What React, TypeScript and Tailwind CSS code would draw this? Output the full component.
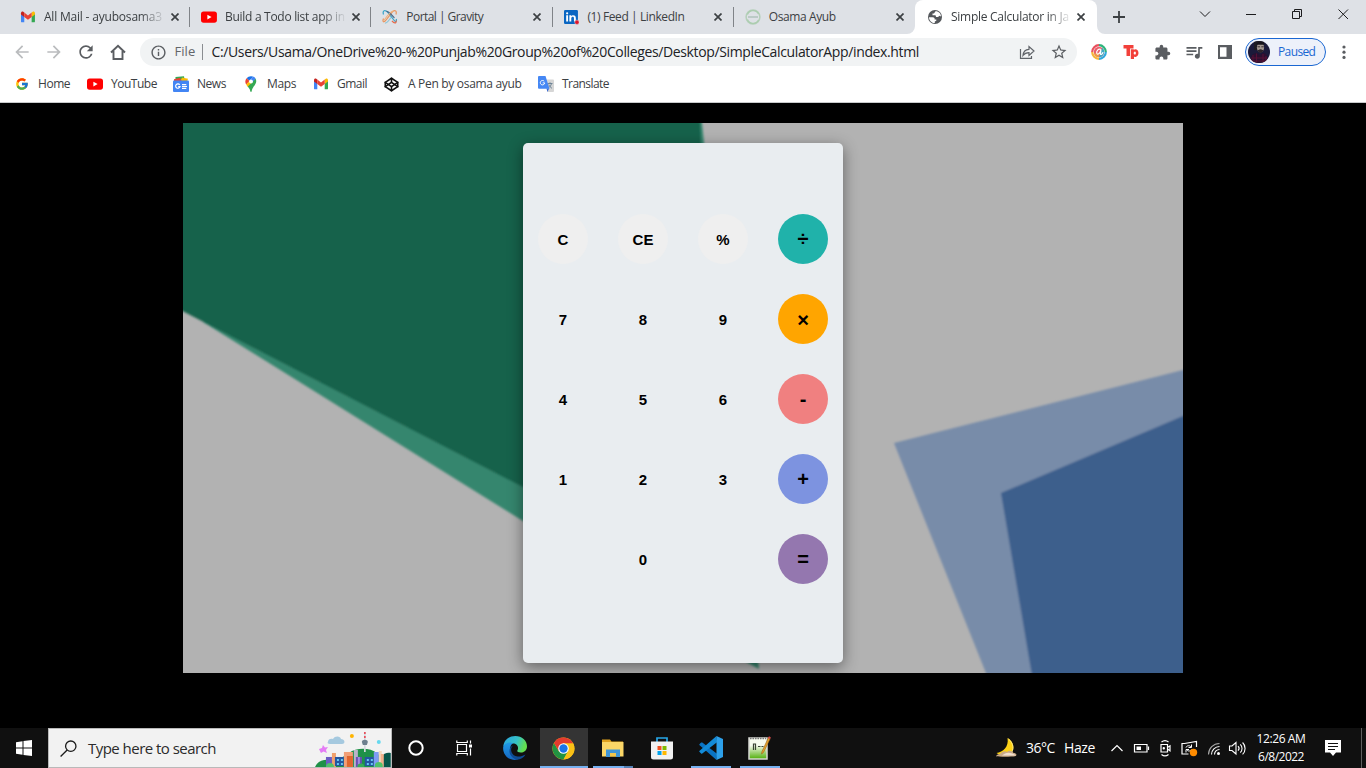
import React from 'react';
import type { ReactNode } from 'react';
import { MdArrowBack, MdArrowForward, MdRefresh, MdStarBorder, MdExtension, MdQueueMusic, MdInfoOutline } from 'react-icons/md';
import { FcGoogle } from 'react-icons/fc';
import { FiCodepen } from 'react-icons/fi';

/* ---------- site icons ---------- */

const Gmail = () => (
  <svg width="16" height="16" viewBox="0 0 16 16">
    <path d="M1 4.2V12.4a.9.9 0 0 0 .9.9H4.300V7z" fill="#4285f4" />
    <path d="M15 4.200V12.400a.9.9 0 0 1-.9.9H11.700V7z" fill="#34a853" />
    <path d="M11.700 3.600V8L15 5.500V4.200c0-1.500-1.500-2-2.500-1.300z" fill="#fbbc04" />
    <path d="M4.300 3.600V8L1 5.500V4.200c0-1.500 1.500-2 2.500-1.300z" fill="#c5221f" />
    <path d="M4.300 8V3.600L8 6.400l3.700-2.800V8L8 10.800z" fill="#ea4335" />
  </svg>
);

const YouTube = () => (
  <svg width="16" height="16" viewBox="0 0 16 16">
    <rect x="0" y="2.500" width="16" height="11.200" rx="2.600" fill="#f00" />
    <path d="M6.400 5.700v4.800l4.200-2.400z" fill="#fff" />
  </svg>
);

const Gravity = () => (
  <svg width="16" height="16" viewBox="0 0 16 16" fill="none" strokeWidth="1.200">
    <path d="M1.500 5.500C0 1 3.500.5 6.500 4l5 6.500c2 3 3.500 2.500 2.800-.5" stroke="#35a4c9" />
    <path d="M14 5.500C15.500 1 12 .5 9.500 4l-5 6.500c-2.500 3.500-4.500 3-3-1" stroke="#e8935c" />
    <path d="M4.500 2.500C6 1.500 9 5 12.500 9" stroke="#4a6a8c" />
    <path d="M12 2C9 1.500 5 7 2 11.500" stroke="#f0b27c" />
    <path d="M3 14.200c2 .2 4-2.700 6-5.700" stroke="#8cc5d6" />
    <path d="M10 12c2 2.500 4.500 3 4.300-.5" stroke="#e46b4c" />
  </svg>
);

const LinkedIn = () => (
  <svg width="16" height="16" viewBox="0 0 16 16">
    <rect x="0" y="1" width="14" height="14" rx="1.200" fill="#0a66c2" />
    <path d="M2.200 6.300h1.900v6.200H2.200zM5.400 6.300h1.800v.9c.9-1.500 4.700-1.500 4.700 1.700v3.600h-1.900V9.400c0-2.200-2.700-1.900-2.700 0v3.100H5.400z" fill="#fff" />
    <circle cx="3.150" cy="4.300" r="1.100" fill="#fff" />
    <circle cx="13" cy="13.300" r="2.200" fill="#e0162b" stroke="#dee1e6" strokeWidth=".5" />
  </svg>
);

const GreenRing = () => (
  <svg width="16" height="16" viewBox="0 0 16 16" fill="none">
    <circle cx="8" cy="8" r="6.900" stroke="#b5cfb9" strokeWidth="1.500" />
    <path d="M2.500 5.500A6 6 0 0 1 13.500 5M2.500 10.500A6 6 0 0 0 13.500 11" stroke="#aacdae" strokeWidth="1.200" />
    <path d="M3 8h10" stroke="#b3c4be" strokeWidth="1.600" />
  </svg>
);

const Globe = () => (
  <svg width="16" height="16" viewBox="0 0 16 16" className="shrink-0">
    <circle cx="8" cy="8" r="7" fill="#54575b" />
    <path d="M8.500 2.200 7 4.500H5.500v1.700l3 .1.600 1.700H11l1.500-1.200 1.500.7C14 4.500 11.500 2 8.500 2.200z" fill="#fff" />
    <path d="M2 8.200h3.500c2 0 2.300 1 2.100 2.200h1.700v1.300l-1.500.7v1.700C4.800 14 2 11.500 2 8.200z" fill="#fff" />
  </svg>
);

const GoogleNews = () => (
  <svg width="16" height="16" viewBox="0 0 16 16">
    <path d="M2.500 1 11 .3l.5 4H2.500z" fill="#34a853" />
    <path d="M9 1.500l6 1.200-1 3H7z" fill="#fbbc04" />
    <path d="M1 3.200l6-1.400 2 4H1z" fill="#ea4335" />
    <rect x="0" y="4.500" width="16" height="11.500" rx="1" fill="#4285f4" />
    <path d="M6.700 8.800A2.200 2.200 0 1 0 7 10.600H5.200M9 8.600h4.300M9 10.500h5M9 12.400h4.300" fill="none" stroke="#fff" strokeWidth="1.200" />
  </svg>
);

const GoogleMaps = () => (
  <svg width="16" height="16" viewBox="0 0 16 16">
    <path d="M8 0.200A5.600 5.600 0 0 0 3.600 2.300l3 2.600L10 .6A6 6 0 0 0 8 .2z" fill="#1a73e8" />
    <path d="M3.600 2.300A5.600 5.600 0 0 0 3.200 8.600l3.400-3.700z" fill="#ea4335" />
    <path d="M10 .6 6.400 5 9.600 7.200l3.100-4.400A5.500 5.500 0 0 0 10 .6z" fill="#4285f4" />
    <path d="M9.600 7.200 4.800 11 3.200 8.600 6.400 5z" fill="#fbbc04" />
    <path d="M12.700 2.800C15 8 9.300 9.800 8.700 15.200c-.2.900-1.200.9-1.400 0-.3-2-1.300-3-2.500-4.700z" fill="#34a853" />
    <circle cx="8" cy="5.400" r="2" fill="#fff" />
  </svg>
);

const Translate = () => (
  <svg width="16" height="16" viewBox="0 0 16 16">
    <path d="M6.500 3.500H15a1 1 0 0 1 1 1V15a1 1 0 0 1-1 1H9.500z" fill="#d6d6d6" />
    <path d="M9.500 7.500h5M12 6.300v1.200M13.500 7.500c-.5 2.300-2 3.800-3.500 4.800M10.800 8.500c.7 1.800 1.800 2.900 3.200 3.800" stroke="#667e92" strokeWidth=".9" fill="none" />
    <path d="M8.500 12.500 11 12.500 9.500 16z" fill="#3367d6" />
    <path d="M1 0h6.500L11.500 12.700H1a1 1 0 0 1-1-1V1a1 1 0 0 1 1-1z" fill="#4587f4" />
    <path d="M6.200 5.300A2.200 2.200 0 1 0 6.700 6.900H4.700" fill="none" stroke="#fff" strokeWidth="1" />
  </svg>
);

/* ---------- browser chrome ---------- */

const Cross = () => (
  <svg width="8" height="8" viewBox="0 0 8 8" className="shrink-0">
    <path d="M.5.5l7 7M7.500.5l-7 7" stroke="#3c4043" strokeWidth="1.700" />
  </svg>
);

const tabs: { icon: ReactNode; title: string; track: string; fade: boolean }[] = [
  { icon: <Gmail />, title: 'All Mail - ayubosama3', track: 'tracking-[-0.19px]', fade: true },
  { icon: <YouTube />, title: 'Build a Todo list app in', track: 'tracking-[-0.3px]', fade: true },
  { icon: <Gravity />, title: 'Portal | Gravity', track: 'tracking-[-0.55px]', fade: false },
  { icon: <LinkedIn />, title: '(1) Feed | LinkedIn', track: 'tracking-[-0.4px]', fade: false },
  { icon: <GreenRing />, title: 'Osama Ayub', track: 'tracking-[-0.39px]', fade: false },
];

function TabStrip() {
  return (
    <div className="flex h-[34px] bg-[#dee1e6] pl-[9px]">
      {tabs.map((t, i) => (
        <div key={t.title} className="flex h-[34px] w-[181.200px] shrink-0 items-center pl-[11px]">
          {t.icon}
          <div className={`ml-2 w-[122px] whitespace-nowrap ${t.track} ${t.fade ? '[mask-image:linear-gradient(to_right,black_96px,transparent_122px)]' : ''}`}>{t.title}</div>
          <div className="ml-[5.500px] flex w-[18.500px]"><Cross /></div>
          {i < 4 && <div className="h-5 w-px shrink-0 bg-[#808388]" />}
        </div>
      ))}
      <div className="relative flex h-[34px] w-[182px] shrink-0 items-center rounded-t-lg bg-white pl-[12px]">
        <svg className="absolute bottom-0 -left-2" width="8" height="8" viewBox="0 0 8 8"><path d="M8 0v8H0a8 8 0 0 0 8-8z" fill="#fff" /></svg>
        <svg className="absolute -right-2 bottom-0" width="8" height="8" viewBox="0 0 8 8"><path d="M0 0v8h8a8 8 0 0 1-8-8z" fill="#fff" /></svg>
        <Globe />
        <div className="ml-2 w-[121px] tracking-[-0.26px] whitespace-nowrap [mask-image:linear-gradient(to_right,black_96px,transparent_121px)]">Simple Calculator in Ja</div>
        <div className="ml-[5px] flex"><Cross /></div>
      </div>
      <svg className="mt-[11px] ml-[16px] shrink-0" width="12" height="12" viewBox="0 0 12 12"><path d="M6 0v12M0 6h12" stroke="#3c4043" strokeWidth="1.800" /></svg>
      <svg className="ml-auto h-7 w-[167px] shrink-0" viewBox="1199 0 167 28" fill="none" stroke="#1c1c1e" strokeWidth="1">
        <path d="M1200 11.500l5 5 5-5" />
        <path d="M1246 14.500h10" />
        <path d="M1292.500 11.500h7v7h-7zM1294.500 11.500v-2h7v7h-2" />
        <path d="M1338.500 9.500l9.500 9.500M1348 9.500l-9.500 9.500" />
      </svg>
    </div>
  );
}

const Swirl = () => (
  <svg width="16" height="16" viewBox="0 0 16 16" fill="none">
    <path d="M8 1.200A6.800 6.800 0 0 0 1.200 8" stroke="#e9505d" strokeWidth="2.200" />
    <path d="M1.200 8A6.800 6.800 0 0 0 8 14.800" stroke="#f5b53c" strokeWidth="2.200" />
    <path d="M8 14.800A6.800 6.800 0 0 0 14.800 8" stroke="#2fa8dc" strokeWidth="2.200" />
    <path d="M14.800 8A6.800 6.800 0 0 0 8 1.200" stroke="#2db37c" strokeWidth="2.200" />
    <circle cx="8" cy="8" r="5.200" fill="#e9606c" />
    <path d="M8 13.200A5.200 5.200 0 0 0 11 3.800z" fill="#3fa9c4" />
    <path d="M3 9.500a5.200 5.200 0 0 0 5 3.700l.5-4z" fill="#ef9a45" />
    <path d="M10.300 5.500C7 4.300 5.300 7 5.700 9.200c.6 2 3.300.6 4.200-3l-.5 3.600c.2 1.200 2.200.4 2.600-1.600" stroke="#fff" strokeWidth="1.200" />
  </svg>
);

function Toolbar() {
  return (
    <div className="flex h-9 items-center bg-white pl-[12px]">
      <MdArrowBack size={20} color="#babcbe" className="shrink-0" />
      <MdArrowForward size={20} color="#babcbe" className="ml-3 shrink-0" />
      <MdRefresh size={20} color="#5a5d61" className="ml-3 shrink-0" />
      <svg className="ml-[14px] shrink-0" width="16" height="16" viewBox="0 0 16 16" fill="none" stroke="#5a5d61" strokeWidth="1.900">
        <path d="M1 8.500 8 1.700l7 6.800M3.500 7v8h9V7" />
      </svg>
      <div className="ml-[14px] flex h-7 w-[937px] shrink-0 items-center rounded-full bg-[#f1f3f4] pl-[10px]">
        <MdInfoOutline size={17} color="#5a5d61" />
        <span className="ml-[7.500px] w-[27px] text-[13px] tracking-[0.05px] text-[#63666a]">File</span>
        <div className="h-4 w-px bg-[#8a8d91]" />
        <span className="ml-[9px] w-[800px] text-sm tracking-[-0.368px] whitespace-nowrap text-[#202124]">C:/Users/Usama/OneDrive%20-%20Punjab%20Group%20of%20Colleges/Desktop/SimpleCalculatorApp/index.html</span>
        <svg className="ml-[7px] shrink-0" width="16" height="16" viewBox="0 0 16 16" fill="none" stroke="#5f6368" strokeWidth="1.200">
          <path d="M1.500 5v9.400h11V12" />
          <path d="M4 11.500C4.300 7.800 6.300 5.500 10 5.300V2.500L15 7l-5 4.500V8.700C7.500 8.700 5.500 9.500 4 11.500z" />
        </svg>
        <MdStarBorder size={18} color="#5a5d61" className="ml-[15px] shrink-0" />
      </div>
      <div className="ml-[14px] flex w-[143px] shrink-0 items-center">
        <Swirl />
        <svg className="ml-4" width="16" height="16" viewBox="0 0 16 16" fill="#f2403a">
          <path d="M.5 1h10v3.500H7V12H3.500V4.500h-3z" />
          <path fillRule="evenodd" d="M7.800 5.200h3v.6c2.200-1.500 4.700.2 4.700 3.300s-2.500 4.700-4.500 3.300V15H7.800zM12 7.400c-1.700 0-1.700 3.200 0 3.200 1.200 0 1.200-3.200 0-3.200z" />
        </svg>
        <MdExtension size={17} color="#5a5d61" className="ml-[15px]" />
        <MdQueueMusic size={20} color="#5a5d61" className="ml-[13px]" />
        <svg className="ml-[14px]" width="14" height="14" viewBox="0 0 14 14"><path fillRule="evenodd" d="M0 0h14v14H0zM2 2.200v9.600h6.500V2.200z" fill="#5a5d61" /></svg>
      </div>
      <div className="ml-[11px] flex h-7 w-[81px] shrink-0 items-center rounded-full border border-[#1a67d2] bg-[#edf1fa] pl-[2px]">
        <svg width="22" height="22" viewBox="0 0 22 22">
          <clipPath id="face"><circle cx="11" cy="11" r="11" /></clipPath>
          <g clipPath="url(#face)">
            <rect width="22" height="22" fill="#1b1a3a" />
            <path d="M6 0h10v9H6z" fill="#1d1b22" />
            <ellipse cx="12.500" cy="6.500" rx="3.600" ry="4.800" fill="#a59a93" />
            <path d="M8.500 3c1-3 7-3 8 0l-1 .8h-6z" fill="#17141c" />
            <path d="M9.500 5.800h2.600M13.300 5.800h2.500" stroke="#3d3236" />
            <path d="M9.500 9c1 3.500 5 3.500 6 0l-1 0c-1-1-3-1-4 0z" fill="#2d2429" />
            <path d="M2 22c0-7 3-10 7-10l3 2 3-2c4 0 5 4 5 10z" fill="#2a1030" />
            <path d="M5 14v8M8.500 12.500V22M15 13v9M18 15v7M3 17h16M3 20h16" stroke="#5b1235" strokeWidth=".9" />
          </g>
        </svg>
        <span className="ml-2 tracking-[-0.62px] whitespace-nowrap text-[#1a67d2]">Paused</span>
      </div>
      <svg className="ml-4 shrink-0" width="4" height="14" viewBox="0 0 4 14" fill="#5a5d61"><circle cx="2" cy="2" r="1.600" /><circle cx="2" cy="7.200" r="1.600" /><circle cx="2" cy="12.400" r="1.600" /></svg>
    </div>
  );
}

const bookmarks: { icon: ReactNode; label: string; cls: string }[] = [
  { icon: <FcGoogle size={14} className="mx-px" />, label: 'Home', cls: 'w-[73px] tracking-[-0.45px]' },
  { icon: <YouTube />, label: 'YouTube', cls: 'w-[86px] tracking-[-0.48px]' },
  { icon: <GoogleNews />, label: 'News', cls: 'w-[70px] tracking-[-0.45px]' },
  { icon: <GoogleMaps />, label: 'Maps', cls: 'w-[70px] tracking-[-0.38px]' },
  { icon: <Gmail />, label: 'Gmail', cls: 'w-[71px] tracking-[-0.5px]' },
  { icon: <FiCodepen size={15} strokeWidth={2.500} color="#111" className="mr-px" />, label: 'A Pen by osama ayub', cls: 'w-[154px] tracking-[-0.31px]' },
  { icon: <Translate />, label: 'Translate', cls: 'w-[80px] tracking-[-0.55px]' },
];

const Bookmarks = () => (
  <div className="flex h-[33px] items-center border-b border-[#c8cacc] bg-white pb-1 pl-[14px]">
    {bookmarks.map((b) => (
      <div key={b.label} className={`flex shrink-0 items-center whitespace-nowrap ${b.cls}`}>
        {b.icon}
        <span className="ml-2">{b.label}</span>
      </div>
    ))}
  </div>
);

/* ---------- calculator page ---------- */

const plain = 'text-[15px] pt-0.5';
const soft = 'text-[15px] pt-0.5 bg-[#efefef]';
const keys: [string, string][] = [
  ['C', soft], ['CE', soft], ['%', soft], ['÷', 'text-xl bg-[#20b2aa]'],
  ['7', plain], ['8', plain], ['9', plain], ['×', 'text-xl pt-0.5 bg-[#ffa500]'],
  ['4', plain], ['5', plain], ['6', plain], ['-', 'text-xl bg-[#f08080]'],
  ['1', plain], ['2', plain], ['3', plain], ['+', 'text-xl bg-[#7d93e0]'],
  ['', plain], ['0', plain], ['', plain], ['=', 'text-xl bg-[#9477af]'],
];

const Calculator = () => (
  <div className="h-[520px] w-[320px] rounded-[5px] bg-[#e9edf0] pt-[56px] font-['Liberation_Sans',sans-serif] font-bold text-black shadow-[0_4px_15px_rgba(0,0,0,0.45)]">
    <div className="grid grid-cols-4">
      {keys.map(([label, cls], i) => (
        <div key={i} className="flex h-20 items-center justify-center">
          <button className={`flex size-[50px] items-center justify-center rounded-full ${cls}`}>{label}</button>
        </div>
      ))}
    </div>
  </div>
);

const Page = () => (
  <div className="flex h-[625px] justify-center bg-black pt-5">
    <div className="grid h-[550px] w-[1000px] justify-items-center overflow-hidden">
      <svg className="col-start-1 row-start-1" width="1000" height="550" viewBox="0 0 1000 550">
        <defs><filter id="soften" x="-5%" y="-5%" width="110%" height="110%"><feGaussianBlur stdDeviation="0.900" /></filter></defs>
        <rect width="1000" height="550" fill="#b2b2b2" />
        <g filter="url(#soften)">
          <path d="M517 -20 519 0 576 546 565 540 340 398 20 199z" fill="#36866e" />
          <path d="M-20 -20H517V0L540 467.500 -20 178z" fill="#18624c" />
          <path d="M711 320 1020 242V570H811z" fill="#788ca9" />
          <path d="M818 370 1020 284.500V570H852z" fill="#3c5e8c" />
        </g>
      </svg>
      <div className="z-10 col-start-1 row-start-1 pt-5"><Calculator /></div>
    </div>
  </div>
);

/* ---------- taskbar ---------- */

const City = () => (
  <svg width="76" height="38" viewBox="0 0 76 38" className="self-end">
    <path d="M0 38c3-6 8-8 16-7 8 0 12-3 18-7 8-6 22-5 28 0 5 4 8 8 10 14z" fill="#1f9148" />
    <path d="M66 28c3-4 7-5 10-4v14H64z" fill="#07564b" />
    <path d="M13 13c0-3 3-4 5-3 2-4 8-3 8 0 4 0 5 5 1 5H15c-2 0-3-1-2-2z" fill="#a5c9df" />
    <path d="M4 20l3-1 1-3 2 2.500 3-.5-2 3 1 3-3.500-1.500L6 24z" fill="#e57cf5" />
    <circle cx="37" cy="7" r="2" fill="#ffb400" />
    <circle cx="64" cy="13" r="2" fill="#66d9ef" />
    <path d="M50 3v20" stroke="#d5d9e0" strokeWidth="1.700" />
    <path d="M50 3v2M50 7v2" stroke="#e8505b" strokeWidth="1.700" />
    <path d="M47 13c0-3 6-3 6 0l-1 3h-4z" fill="#6d7f8e" />
    <rect x="11" y="28" width="6" height="10" fill="#6b5cc4" />
    <rect x="17" y="24" width="4" height="14" fill="#f0a06c" />
    <rect x="20" y="28" width="9" height="9" fill="#2456a0" />
    <path d="M22 30h2v2h-2zM26 30h2v2h-2zM22 34h2v2h-2zM26 34h2v2h-2z" fill="#66c7f2" />
    <rect x="29" y="23" width="9" height="15" fill="#f1a078" />
    <path d="M32 27h6v11h-6z" fill="#e0662f" />
    <rect x="39" y="21" width="4" height="17" fill="#b9b4c8" />
    <rect x="41" y="28" width="6" height="10" fill="#6a4fb5" />
    <rect x="43" y="28" width="2" height="10" fill="#9f8ce0" />
    <rect x="50" y="28" width="9" height="9" fill="#2456a0" />
    <path d="M52 30h2v2h-2zM56 30h2v2h-2zM52 34h2v2h-2zM56 34h2v2h-2z" fill="#66c7f2" />
    <rect x="59" y="23" width="5" height="15" fill="#7e9cf5" />
    <rect x="64" y="22" width="3" height="16" fill="#f0d9c0" />
    <rect x="66" y="25" width="3" height="13" fill="#f0b08c" />
    <circle cx="15" cy="38" r="4" fill="#4fc36a" />
    <circle cx="46" cy="38" r="3.500" fill="#36ab58" />
    <circle cx="64" cy="37" r="4" fill="#4fc36a" />
  </svg>
);

const Edge = () => (
  <svg width="24" height="24" viewBox="0 0 24 24">
    <defs>
      <linearGradient id="eg" x1="0" y1="0" x2="1" y2=".3"><stop offset="0" stopColor="#2aa4e0" /><stop offset=".6" stopColor="#35c1c8" /><stop offset="1" stopColor="#63e04f" /></linearGradient>
      <linearGradient id="eb" x1="0" y1="0" x2="0" y2="1"><stop offset="0" stopColor="#1f9ae6" /><stop offset="1" stopColor="#1666c0" /></linearGradient>
    </defs>
    <path d="M.3 10.500C1 4 6.200 0 12.300 0 19 0 24 4.800 24 10.200c0 4-2.900 6.300-6.300 6.300-2.800 0-3.900-1-3.300-2 1.800-3.500-.4-7-4.400-7C5.500 7.500 1.500 8.500.3 10.500z" fill="url(#eg)" />
    <path d="M.2 10.800C1.200 7.800 6 5.500 10 7.200 7.500 8.800 6.500 12 7.500 15.500c1.200 4 4.500 6.800 8.200 7.300-1.200.8-2.400 1.100-3.700 1.100C4.500 24 -.6 17.500.2 10.800z" fill="url(#eb)" />
    <path d="M10 9.500c-4 4-1.200 10.500 4.500 11 3 .2 5.500-.7 8-2-1.800 3.200-5 5-8.400 5.300C9 22.500 6 18.500 6.500 14c.2-2 1.700-3.800 3.500-4.500z" fill="#0f4b94" />
  </svg>
);

const Chrome = () => (
  <svg width="23" height="23" viewBox="0 0 48 48">
    <circle cx="24" cy="24" r="23" fill="#fbc116" />
    <path d="M24 24 14.500 29.500 4.100 12.500A23 23 0 0 0 24 47L33.500 29.500z" fill="#229342" />
    <path d="M24 13h20a23 23 0 0 1-20 34l9.500-17.500z" fill="#fbc116" />
    <path d="M4.100 12.500A23 23 0 0 1 44 13H24L14.500 29.500z" fill="#e33b2e" />
    <circle cx="24" cy="24" r="11" fill="#fff" />
    <circle cx="24" cy="24" r="8.700" fill="#1a73e8" />
  </svg>
);

const Explorer = () => (
  <svg width="22" height="20" viewBox="0 0 22 20">
    <path d="M0 1.500h8l1.500 2H21V6H0z" fill="#e0a21f" />
    <path d="M0 4h21.500v14.500H0z" fill="#fbd667" />
    <path d="M4 19v-7.500h14V19h-4v-4H8v4z" fill="#3f95d6" />
    <path d="M8 15h6v3.500H8z" fill="#f3c64c" />
  </svg>
);

const Store = () => (
  <svg width="24" height="24" viewBox="0 0 24 24">
    <path d="M7 6V2h10v4" fill="none" stroke="#27a7e8" strokeWidth="1.700" />
    <path d="M1 5.500h22V21a2.500 2.500 0 0 1-2.500 2.500h-17A2.500 2.500 0 0 1 1 21z" fill="#f2f2f2" />
    <path d="M7.500 10h4v4h-4z" fill="#f25022" /><path d="M12.500 10h4v4h-4z" fill="#7fba00" />
    <path d="M7.500 15h4v4h-4z" fill="#00a4ef" /><path d="M12.500 15h4v4h-4z" fill="#ffb900" />
  </svg>
);

const VSCode = () => (
  <svg width="24" height="24" viewBox="0 0 24 24">
    <path d="M17.500 24 .6 9.200a.8.8 0 0 1 0-1.200l1.500-1.400c.4-.3.800-.3 1.200 0L18 17.800z" fill="#0a74c4" />
    <path d="M17.500 0 .6 14.800a.8.8 0 0 0 0 1.200l1.500 1.400c.4.3.8.3 1.200 0L18 6.200z" fill="#138bd8" />
    <path d="M17.500 0 24 3v18l-6.500 3z" fill="#2da0ea" />
  </svg>
);

const Notepad = () => (
  <svg width="23" height="24" viewBox="0 0 23 24">
    <defs><linearGradient id="np" x1="0" y1="0" x2="0" y2="1"><stop offset=".35" stopColor="#f7fbef" /><stop offset="1" stopColor="#4fae08" /></linearGradient></defs>
    <path d="M1 2h18v21H1z" fill="url(#np)" stroke="#d7d9d4" strokeWidth="1.500" />
    <path d="M2 2.500h16" stroke="#777" strokeWidth="1.500" strokeDasharray="1.500 1" />
    <path d="M5.500 14V8h2v6M10 10.500h2.500M13.500 10.500h2" stroke="#3b4434" strokeWidth="1.200" fill="none" />
    <path d="M20.500 1.500 14 15.500l-.5 2.500 2-1.600L22 3z" fill="#e8a32c" stroke="#9a6315" strokeWidth=".6" />
    <path d="M20.500 1 22.500 2.500" stroke="#d64a4a" strokeWidth="2" />
  </svg>
);

const apps: { icon: ReactNode; slot: string; bar: string }[] = [
  { icon: <Edge />, slot: '', bar: '' },
  { icon: <Chrome />, slot: 'bg-[#343434]', bar: 'w-12 bg-[#76b0f0]' },
  { icon: <Explorer />, slot: '', bar: 'w-10 bg-[linear-gradient(to_right,#76b0f0_31px,#5480b4_31px)]' },
  { icon: <Store />, slot: '', bar: '' },
  { icon: <VSCode />, slot: '', bar: 'w-10 bg-[#76b0f0]' },
  { icon: <Notepad />, slot: '', bar: 'w-10 bg-[#76b0f0]' },
];

const Taskbar = () => (
  <div className="flex h-10 bg-[#101010] text-white">
    <div className="flex w-12 items-center justify-center">
      <svg width="16" height="16" viewBox="0 0 16 16" fill="#fff"><path d="M0 2.200 6.500 1.300V7.500H0zM7.500 1.100 16 0V7.500H7.500zM0 8.500H6.500V14.700L0 13.800zM7.500 8.500H16V16L7.500 14.900z" /></svg>
    </div>
    <div className="flex w-[344px] items-center border border-[#b9b9b9] bg-[#f2f2f2] pl-[11px]">
      <svg width="17" height="17" viewBox="0 0 17 17" fill="none" stroke="#1b1b1b" strokeWidth="1.300"><circle cx="10.800" cy="6.200" r="5.200" /><path d="M7.200 10 .6 16.500" /></svg>
      <span className="ml-[11px] w-[228px] text-[15px] tracking-[-0.53px] text-[#2b2b2b]">Type here to search</span>
      <City />
    </div>
    <div className="flex w-12 items-center justify-center">
      <svg width="16" height="16" viewBox="0 0 16 16"><circle cx="8" cy="8" r="6.700" fill="none" stroke="#fff" strokeWidth="2" /></svg>
    </div>
    <div className="flex w-[50px] items-center pl-4">
      <svg width="17" height="16" viewBox="0 0 17 16" fill="none" stroke="#fff" strokeWidth="1.200">
        <path d="M1.500 4.500h9v7h-9zM.8.500v2h10.500V.5M.8 15.500v-2h10.500v2M14.500.5v3M14.500 8.500v7" /><path d="M13 4.500h3v3h-3z" fill="#fff" stroke="none" />
      </svg>
    </div>
    {apps.map((a, i) => (
      <div key={i} className="grid h-10 w-[49px] justify-items-center">
        <div className={`col-start-1 row-start-1 flex h-10 w-12 items-center justify-center ${a.slot}`}>{a.icon}</div>
        <div className={`col-start-1 row-start-1 h-0.5 self-end ${a.bar}`} />
      </div>
    ))}
    <div className="ml-auto flex items-center">
      <svg width="24" height="22" viewBox="0 0 24 22">
        <path d="M12.500 1c6 3 8 11 3.500 15.500-4 3.500-10 2.500-14.500-.5C8 15 14 10 12.500 1z" fill="#fcd116" />
        <path d="M13.500 2c5 4 6 11 2 14.500" fill="none" stroke="#fff0a0" strokeWidth=".8" />
        <path d="M5 17c2-2.500 5-3.500 7-2 2-2.500 6-1 6.500 1 3 0 4 2.500 1.500 3.300-3 .6-17 .6-19 0 .3-1.300 2-2.300 4-2.300z" fill="#c9a987" />
        <path d="M10 16.500c3-1.500 7-1 11 2H7z" fill="#f0dfcf" />
      </svg>
      <span className="ml-[7.500px] w-[38px] text-sm tracking-[-0.46px]">36°C</span>
      <span className="w-[46px] text-sm tracking-[-0.4px]">Haze</span>
      <svg className="h-10 w-[136px]" viewBox="1110 728 136 40" fill="none" stroke="#fff" strokeWidth="1.200">
        <path d="M1111.500 751l5.500-5.500 5.500 5.500" />
        <path d="M1134.500 744.500h12.500v7.500h-12.500z" /><path d="M1136.500 746.500h4.500v3.500h-4.500z" fill="#fff" stroke="none" /><path d="M1148.500 746.500v3.500" />
        <path d="M1161 744.500h6.500v7.500h-6.500zM1167.500 747.500l2.500-1.700v5l-2.500-1.700M1161.500 742c2-1.700 5-1.700 7 0M1161.500 754.500c2 1.700 5 1.700 7 0" /><circle cx="1163.800" cy="748.300" r=".6" />
        <path d="M1196.500 747v-5.500l-12 2h-2.500v10.500h6.500" />
        <path d="M1186 747.500c.5-2 4-2.500 5-.5M1191.500 744.500v3h-3M1191.500 749.500c-1 2-4 2-5 0M1186 752.500v-3h3" strokeWidth="1" />
        <circle cx="1193.500" cy="752.500" r="3.700" fill="#ff8c00" stroke="none" />
        <g strokeWidth="1.100"><path d="M1208.500 754.500a11 11 0 0 1 11-11" stroke="#aaa" /><path d="M1211.500 754.500a8 8 0 0 1 8-8" /><path d="M1214.500 754.500a5 5 0 0 1 5-5" /></g><circle cx="1218.500" cy="753.500" r="1.500" fill="#fff" stroke="none" />
        <path d="M1229.500 746h2.500l4-3.500v11.500l-4-3.500h-2.500zM1238 746.200c1.200 1.200 1.200 3.200 0 4.400M1240.300 744.300c2.300 2.200 2.300 6 0 8.200M1242.600 742.500c3.300 3.200 3.300 8.600 0 11.800" strokeWidth="1.100" />
      </svg>
      <div className="flex w-[70px] flex-col items-center text-xs leading-[18px]">
        <span className="tracking-[-0.39px]">12:26 AM</span>
        <span className="tracking-[-0.5px]">6/8/2022</span>
      </div>
      <svg className="ml-[9px]" width="16" height="17" viewBox="0 0 16 17"><path d="M0 0h16v12.500h-5L8 16l-3-3.500H0z" fill="#fff" /><path d="M3 3.500h10M3 6.500h10M3 9.500h7" stroke="#101010" strokeWidth="1.200" /></svg>
      <div className="mr-1 ml-5 h-10 w-px bg-[#5f5f5f]" />
    </div>
  </div>
);

export default function App() {
  return (
    <div className="flex h-[768px] w-[1366px] flex-col overflow-hidden bg-black font-['Open_Sans','Noto_Sans',sans-serif] text-xs text-[#3c4043]">
      <TabStrip />
      <Toolbar />
      <Bookmarks />
      <Page />
      <Taskbar />
    </div>
  );
}
